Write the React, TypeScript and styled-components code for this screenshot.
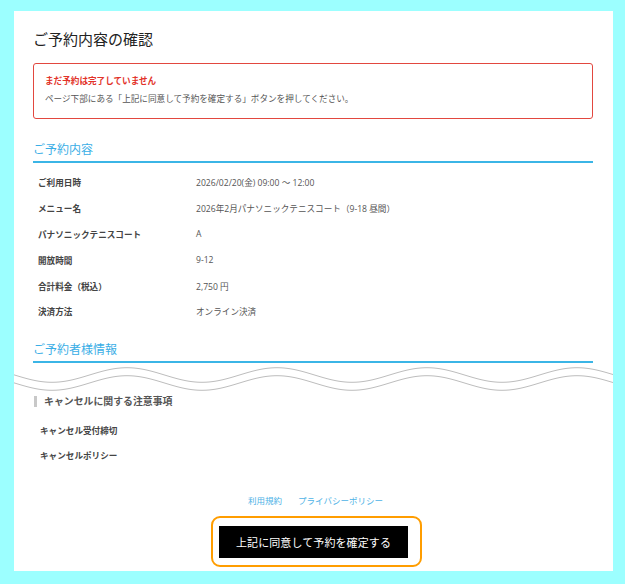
import { createGlobalStyle } from 'styled-components';
import styled from 'styled-components';

const GlobalStyle = createGlobalStyle`
  body {
    margin: 0;
    background: #9cffff;
    font-family: 'Open Sans', 'Noto Sans CJK JP', sans-serif;
    color: #444;
  }
`;

type Row = { label: string; value: string };

const reservation: Row[] = [
  { label: 'ご利用日時', value: '2026/02/20(金) 09:00 ～ 12:00' },
  { label: 'メニュー名', value: '2026年2月パナソニックテニスコート（9-18 昼間）' },
  { label: 'パナソニックテニスコート', value: 'A' },
  { label: '開放時間', value: '9-12' },
  { label: '合計料金（税込）', value: '2,750 円' },
  { label: '決済方法', value: 'オンライン決済' },
];

const Panel = styled.div`
  box-sizing: border-box;
  width: 599px;
  height: 560px;
  margin: 11px 0 0 14px;
  padding: 18px 20px 0 19px;
  background: #fff;
  box-shadow: 0 1px 0 #bdbdbd;
`;

const Title = styled.h1`
  margin: 0;
  font-size: 15px;
  line-height: 20px;
  font-weight: 400;
  color: #222;
`;

const Alert = styled.div`
  margin-top: 14px;
  padding: 10px 11px 12px;
  border: 1px solid #e2473f;
  border-radius: 3px;
  font-size: 8.6px;
  line-height: 14px;
`;

const AlertHead = styled.div`
  margin-bottom: 4px;
  color: #e2332a;
  font-weight: 700;
`;

const AlertText = styled.div`
  color: #555;
`;

const SectionTitle = styled.h2<{ $gap: number }>`
  margin: ${(p) => p.$gap}px 0 0;
  padding-bottom: 3px;
  border-bottom: 2px solid #3bb5e6;
  font-size: 12px;
  line-height: 16px;
  font-weight: 400;
  color: #3aaee6;
`;

const InfoList = styled.div`
  margin-top: 7px;
`;

const InfoRow = styled.div`
  display: grid;
  grid-template-columns: 158px 1fr;
  align-items: center;
  height: 25.8px;
  padding-left: 5px;
  font-size: 8.6px;
`;

const Label = styled.span`
  font-weight: 700;
  color: #444;
`;

const Value = styled.span`
  color: #555;
`;

const Wave = styled.svg`
  display: block;
  margin: 0 -20px 0 -19px;
`;

const SubTitle = styled.h3`
  position: relative;
  margin: 0;
  padding-left: 11px;
  font-size: 9.9px;
  line-height: 14px;
  font-weight: 700;
  color: #555;
  &::before {
    content: '';
    position: absolute;
    left: 1px;
    top: 2px;
    width: 3px;
    height: 11px;
    background: #c8c8c8;
  }
`;

const CancelList = styled.div`
  margin-top: 10px;
`;

const CancelRow = styled.div`
  display: flex;
  align-items: center;
  height: 25px;
  padding-left: 7px;
  font-size: 8.6px;
  font-weight: 700;
  color: #444;
`;

const Links = styled.div`
  display: flex;
  justify-content: center;
  gap: 16px;
  margin: 27px 0 0 5px;
  font-size: 8.5px;
  line-height: 12px;
`;

const Link = styled.a`
  color: #4db2e6;
  text-decoration: none;
`;

const ButtonWrap = styled.div`
  display: flex;
  justify-content: center;
  margin-top: 9px;
`;

const Ring = styled.div`
  box-sizing: border-box;
  width: 211px;
  height: 51px;
  padding: 8px 0 0 6px;
  margin-left: 7px;
  border: 2px solid #ff9d00;
  border-radius: 9px;
`;

const ConfirmButton = styled.button`
  display: block;
  width: 189px;
  height: 32px;
  padding: 0;
  border: none;
  background: #000;
  color: #fff;
  font-family: 'Noto Sans CJK JP', sans-serif;
  font-size: 11px;
  letter-spacing: 0.1px;
  cursor: pointer;
`;

const wavePath = (center: number) => {
  const pts: string[] = [];
  for (let x = 0; x <= 600; x += 3) {
    const y = center - 7.3 * Math.cos((2 * Math.PI * (x - 113)) / 150);
    pts.push(`${x === 0 ? 'M' : 'L'}${x},${y.toFixed(2)}`);
  }
  return pts.join(' ');
};

const App = () => {
  return (
    <>
      <GlobalStyle />
      <Panel>
        <Title>ご予約内容の確認</Title>
        <Alert>
          <AlertHead>まだ予約は完了していません</AlertHead>
          <AlertText>ページ下部にある「上記に同意して予約を確定する」ボタンを押してください。</AlertText>
        </Alert>

        <SectionTitle $gap={23}>ご予約内容</SectionTitle>
        <InfoList>
          {reservation.map((r) => (
            <InfoRow key={r.label}>
              <Label>{r.label}</Label>
              <Value>{r.value}</Value>
            </InfoRow>
          ))}
        </InfoList>

        <SectionTitle $gap={17}>ご予約者様情報</SectionTitle>
        <Wave width="599" height="31" viewBox="0 0 599 31">
          <path d={wavePath(12)} fill="none" stroke="#bdbdbd" strokeWidth="1" />
          <path d={wavePath(20)} fill="none" stroke="#bdbdbd" strokeWidth="1" />
        </Wave>

        <SubTitle>キャンセルに関する注意事項</SubTitle>
        <CancelList>
          <CancelRow>キャンセル受付締切</CancelRow>
          <CancelRow>キャンセルポリシー</CancelRow>
        </CancelList>

        <Links>
          <Link href="#">利用規約</Link>
          <Link href="#">プライバシーポリシー</Link>
        </Links>
        <ButtonWrap>
          <Ring>
            <ConfirmButton>上記に同意して予約を確定する</ConfirmButton>
          </Ring>
        </ButtonWrap>
      </Panel>
    </>
  );
};

export default App;
